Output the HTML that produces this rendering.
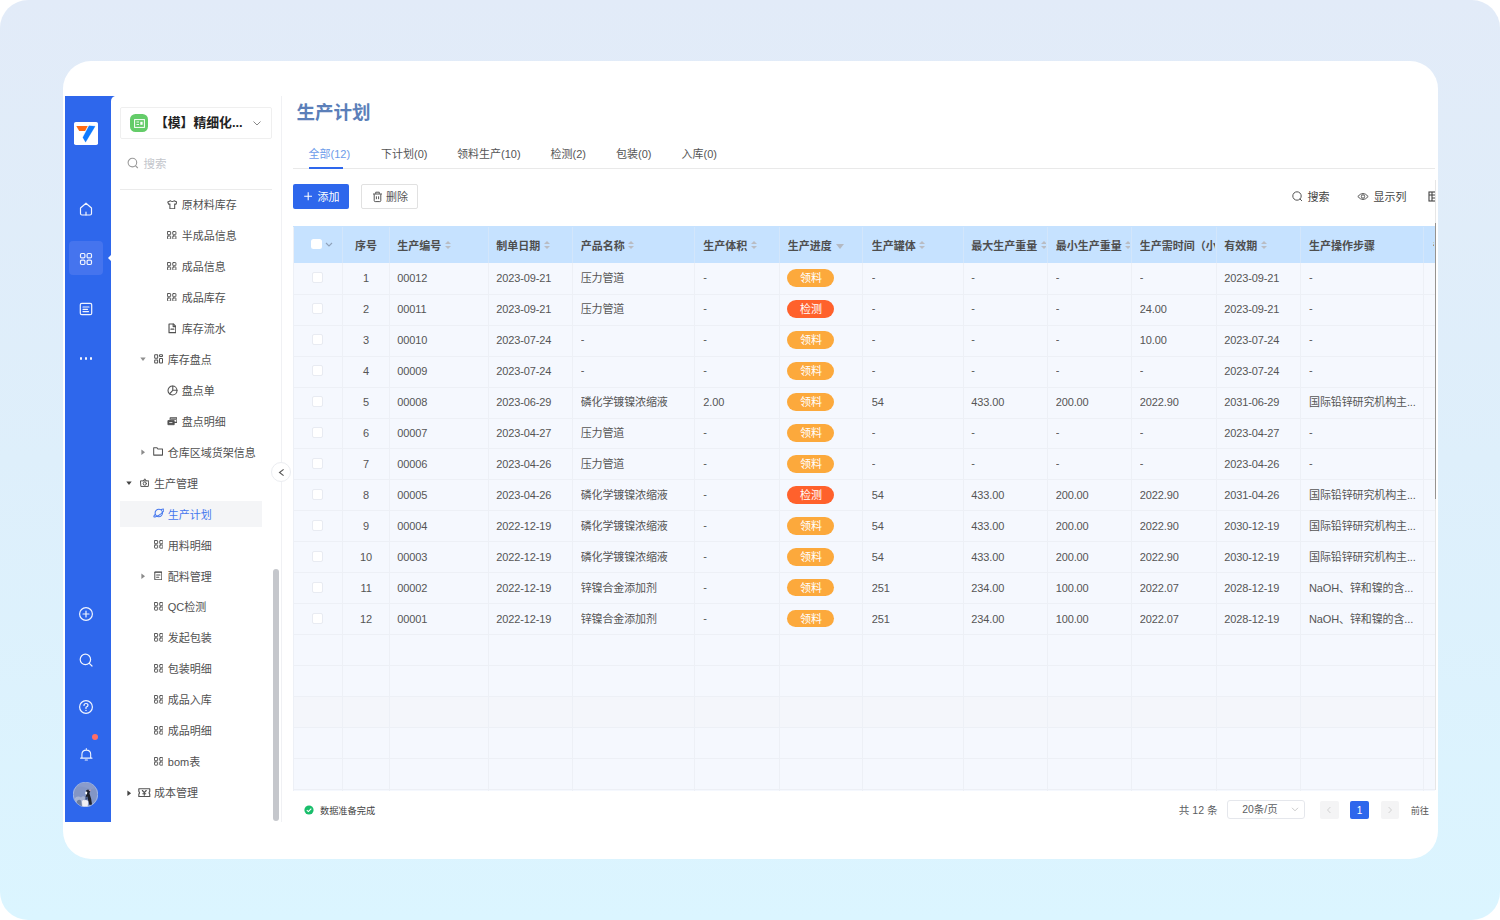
<!DOCTYPE html><html lang="zh-CN"><head><meta charset="utf-8"><title>生产计划</title><style>
*{box-sizing:border-box;margin:0;padding:0}
html,body{width:1500px;height:920px;overflow:hidden;background:#fff}
body{font-family:"Liberation Sans","Noto Sans CJK SC",sans-serif;font-size:11px;color:#444;position:relative}
.abs{position:absolute}
#bg{left:0;top:0;width:1500px;height:920px;border-radius:28px;background:linear-gradient(180deg,#e2ebf8 0%,#deeffb 50%,#dbf5ff 100%)}
#card{left:63px;top:61px;width:1375px;height:798px;border-radius:28px;background:#fff;overflow:hidden}
/* inside card coords are page coords minus (63,61): use wrapper shift */
#in{left:-63px;top:-61px;width:1500px;height:920px}
#bar{left:65px;top:96px;width:50px;height:726px;background:#2e67ec}
#panel{left:110.5px;top:96px;width:171.5px;height:726px;background:#fff;border-top-left-radius:5px}
.ico{position:absolute;display:block}
.mi{position:absolute;height:30.95px;line-height:30.95px;white-space:nowrap;color:#444;font-size:11px}
.mi svg{position:absolute}
.th{position:absolute;top:228px;height:36px;line-height:36px;font-weight:bold;color:#4e4e4e;white-space:nowrap;overflow:hidden;font-size:11px}
.td{position:absolute;height:30.97px;line-height:30.97px;letter-spacing:-0.12px;white-space:nowrap;overflow:hidden;font-size:11px;color:#555}
.vl{position:absolute;top:227px;width:1px;height:563.6px;background:#edf0f6}
.hl{position:absolute;left:293px;width:1142px;height:1px;background:#edf0f6}
.cb{position:absolute;width:11px;height:11px;background:#fff;border:1px solid #e8ebf2;border-radius:2px}
.tag{position:absolute;width:47.2px;height:17.4px;border-radius:9px;color:#fff;text-align:center;line-height:17.4px;font-size:11px}
.sort{display:inline-block;position:relative;width:6px;height:10px;margin-left:3.4px;vertical-align:-0.4px}
.sort:before{content:"";position:absolute;left:0;top:0.6px;border:3px solid transparent;border-bottom:3.8px solid #b9bcc3;border-top:0}
.sort:after{content:"";position:absolute;left:0;top:5.2px;border:3px solid transparent;border-top:3.8px solid #b9bcc3;border-bottom:0}
.filt{display:inline-block;position:relative;width:8px;height:10px;margin-left:4px;vertical-align:-1px}
.filt:after{content:"";position:absolute;left:0;top:3px;border:4px solid transparent;border-top:5px solid #b4b9c2;border-bottom:0}
.tab{position:absolute;top:144.6px;height:18px;line-height:18px;font-size:11px;color:#555;white-space:nowrap}
</style></head><body>
<div id="bg" class="abs"></div>
<div id="card" class="abs"><div id="in" class="abs">
<div id="bar" class="abs"></div>
<div id="panel" class="abs"></div>
<div class="abs" style="left:74.1px;top:121.9px;width:23.5px;height:23px;background:#fff;border-radius:1.8px"></div>
<svg class="ico" style="left:74.1px;top:121.9px" width="23.5" height="23" viewBox="0 0 23.5 23"><path d="M2.3 3.9H13.7L11.1 9.1H5.2Z" fill="#ff6a13"/><path d="M15 3.7L21.2 4.2L11.6 20.2L8.8 15.4Z" fill="#0f7bff" stroke="#0f7bff" stroke-width="0.2" stroke-linejoin="round"/></svg>
<div class="abs" style="left:69px;top:240.5px;width:34px;height:34px;border-radius:4px;background:#4574ee"></div>
<div class="abs" style="left:107.5px;top:254px;width:0;height:0;border:4px solid transparent;border-right:4px solid #fff;border-left:0"></div>
<svg class="ico" style="left:79px;top:201.5px" width="14" height="14" viewBox="0 0 14 14"><path d="M1.5 6L7 1.2L12.5 6V11.5Q12.5 13 11 13H3Q1.5 13 1.5 11.5Z" fill="none" stroke="#f0f4fe" stroke-width="1.2" stroke-linecap="round" stroke-linejoin="round"/><path d="M7 10V13" fill="none" stroke="#f0f4fe" stroke-width="1.2" stroke-linecap="round" stroke-linejoin="round"/></svg>
<svg class="ico" style="left:79px;top:251.5px" width="14" height="14" viewBox="0 0 14 14"><rect x="1.5" y="1.5" width="4.4" height="4.4" rx="1.2" fill="none" stroke="#f0f4fe" stroke-width="1.2" stroke-linecap="round" stroke-linejoin="round"/><rect x="8.1" y="1.5" width="4.4" height="4.4" rx="1.2" fill="none" stroke="#f0f4fe" stroke-width="1.2" stroke-linecap="round" stroke-linejoin="round"/><rect x="1.5" y="8.1" width="4.4" height="4.4" rx="1.2" fill="none" stroke="#f0f4fe" stroke-width="1.2" stroke-linecap="round" stroke-linejoin="round"/><rect x="8.1" y="8.1" width="4.4" height="4.4" rx="1.2" fill="none" stroke="#f0f4fe" stroke-width="1.2" stroke-linecap="round" stroke-linejoin="round"/></svg>
<svg class="ico" style="left:79px;top:302px" width="14" height="14" viewBox="0 0 14 14"><rect x="1.3" y="1.3" width="11.4" height="11.4" rx="1.5" fill="none" stroke="#f0f4fe" stroke-width="1.2" stroke-linecap="round" stroke-linejoin="round"/><path d="M4 5H10M4 7.3H8.5M4 9.6H9.5" fill="none" stroke="#f0f4fe" stroke-width="1.2" stroke-linecap="round" stroke-linejoin="round" stroke-width="1"/></svg>
<div class="abs" style="left:79.7px;top:357.0px;width:2.6px;height:2.6px;border-radius:50%;background:#f4f7fe"></div>
<div class="abs" style="left:84.7px;top:357.0px;width:2.6px;height:2.6px;border-radius:50%;background:#f4f7fe"></div>
<div class="abs" style="left:89.7px;top:357.0px;width:2.6px;height:2.6px;border-radius:50%;background:#f4f7fe"></div>
<svg class="ico" style="left:78px;top:606.3px" width="16" height="16" viewBox="0 0 16 16"><circle cx="8" cy="8" r="6.4" fill="none" stroke="#f0f4fe" stroke-width="1.2" stroke-linecap="round" stroke-linejoin="round"/><path d="M8 5V11M5 8H11" fill="none" stroke="#f0f4fe" stroke-width="1.2" stroke-linecap="round" stroke-linejoin="round"/></svg>
<svg class="ico" style="left:78px;top:652.3px" width="16" height="16" viewBox="0 0 16 16"><circle cx="7.4" cy="7.4" r="5.2" fill="none" stroke="#f0f4fe" stroke-width="1.2" stroke-linecap="round" stroke-linejoin="round"/><path d="M11.3 11.3L14 14" fill="none" stroke="#f0f4fe" stroke-width="1.2" stroke-linecap="round" stroke-linejoin="round"/></svg>
<svg class="ico" style="left:78px;top:698.8px" width="16" height="16" viewBox="0 0 16 16"><circle cx="8" cy="8" r="6.4" fill="none" stroke="#f0f4fe" stroke-width="1.2" stroke-linecap="round" stroke-linejoin="round"/><path d="M6 6.4Q6 4.5 8 4.5Q10 4.5 10 6.3Q10 7.4 8 8.3V9.4" fill="none" stroke="#f0f4fe" stroke-width="1.2" stroke-linecap="round" stroke-linejoin="round"/><circle cx="8" cy="11.4" r="0.7" fill="#fff"/></svg>
<div class="abs" style="left:91.9px;top:733.8px;width:6px;height:6px;border-radius:50%;background:#ff6e66"></div>
<svg class="ico" style="left:78.8px;top:746.6px" width="14.6" height="14.6" viewBox="0 0 16 16"><path d="M3.2 12V8Q3.2 3.4 8 3.4Q12.8 3.4 12.8 8V12M1.8 12.2H14.2M8 1.8V3.2M6.8 14.2H9.2" fill="none" stroke="#f0f4fe" stroke-width="1.2" stroke-linecap="round" stroke-linejoin="round"/></svg>
<svg class="ico" style="left:73.4px;top:781.8px" width="25" height="25" viewBox="0 0 25 25"><defs><clipPath id="avc"><circle cx="12.5" cy="12.5" r="12"/></clipPath></defs><circle cx="12.5" cy="12.5" r="12.3" fill="#8396c5" stroke="#b9cdf4" stroke-width="0.7"/><g clip-path="url(#avc)"><path d="M0 6Q8 3 14 6T25 4V0H0Z" fill="#8a9ccb"/><path d="M2 16Q5 13.5 8 15.5Q10 13.5 12 15L11 25H0Z" fill="#a7b4d3"/><path d="M4 19Q6 17 8 18.5L9 25H3Z" fill="#6f7f9f"/><path d="M13 8.5L15 7.5L17.5 8.8L16.4 11.2L18.2 17L19 22.5L16.5 23L15.3 19L14.3 14.5L12.4 15.5L13.4 12Z" fill="#1f222b"/><path d="M12.3 10Q13.3 9 14.2 10.4Q14.2 12.6 13 12.6Q12 12 12.3 10Z" fill="#fff"/><path d="M15.5 8.2L18 7.4L17.4 9.6Z" fill="#c9a9c4"/><path d="M9 19.5Q9.5 17.8 11.5 18.2Q14.5 17.6 15.3 19.6L14.6 25H9.4Z" fill="#f1f1f4"/><path d="M12.4 15.8L14.4 14.8L14.8 17.2L12.6 17.8Z" fill="#3d5078"/></g></svg>
<div class="abs" style="left:120px;top:107px;width:152px;height:31.5px;border:1px solid #efefef;border-radius:2px;background:#fff"></div>
<div class="abs" style="left:129.7px;top:113.8px;width:18.7px;height:18.7px;border-radius:5.5px;background:#64cc69"></div>
<svg class="ico" style="left:134px;top:118.5px" width="11" height="9" viewBox="0 0 11 9"><rect x="0.6" y="0.6" width="9.8" height="7.8" fill="none" stroke="#fff" stroke-width="1"/><path d="M2.5 3H5M2.5 5.5H5" stroke="#fff" stroke-width="0.9"/><rect x="6.3" y="2.8" width="2.3" height="3" fill="#fff"/></svg>
<div class="abs" style="left:154.9px;top:113.3px;height:20px;line-height:20px;font-size:12.85px;font-weight:bold;color:#222;white-space:nowrap">【模】精细化...</div>
<svg class="ico" style="left:252px;top:120px" width="10" height="7" viewBox="0 0 10 7"><path d="M1.5 1.5L5 5L8.5 1.5" fill="none" stroke="#888" stroke-width="1"/></svg>
<svg class="ico" style="left:127px;top:157px" width="12" height="12" viewBox="0 0 12 12"><circle cx="5.4" cy="5.6" r="4.3" fill="none" stroke="#999" stroke-width="1.1"/><path d="M8.6 8.8L10.8 11" stroke="#999" stroke-width="1.1"/></svg>
<div class="abs" style="left:143.5px;top:154.8px;height:18px;line-height:18px;font-size:11.5px;color:#c3c6cc">搜索</div>
<div class="abs" style="left:120px;top:189px;width:152px;height:1px;background:#ebebeb"></div>
<div class="abs" style="left:120px;top:500.6px;width:142px;height:26.6px;background:#f4f5f7"></div>
<div class="mi" style="left:0;top:189.33px;width:281px;color:#505050">
<span class="abs" style="left:166.80px;top:10.48px;line-height:0"><svg width="10.6" height="9.6" viewBox="0 0 12 12.5" preserveAspectRatio="none"><path d="M4 1L0.9 2.6L1.9 5.6L3.3 5V11.5H8.7V5L10.1 5.6L11.1 2.6L8 1Q6 3 4 1Z" fill="none" stroke="#525252" stroke-width="1.2" stroke-linejoin="round" stroke-linecap="round"/></svg></span>
<span class="abs" style="left:181.7px;top:0.8px">原材料库存</span></div>
<div class="mi" style="left:0;top:220.28px;width:281px;color:#505050">
<span class="abs" style="left:167.40px;top:10.53px;line-height:0"><svg width="9.4" height="8.7" viewBox="0 0 8.9 8.1"><rect x="0.45" y="0.45" width="3" height="3" rx="0.5" fill="none" stroke="#525252" stroke-width="0.9" stroke-linejoin="round" stroke-linecap="round"/><rect x="5.45" y="0.45" width="3" height="3" rx="0.5" fill="none" stroke="#525252" stroke-width="0.9" stroke-linejoin="round" stroke-linecap="round"/><rect x="0.45" y="4.65" width="3" height="3" rx="0.5" fill="none" stroke="#525252" stroke-width="0.9" stroke-linejoin="round" stroke-linecap="round"/><rect x="5.45" y="4.65" width="3" height="3" rx="0.5" fill="none" stroke="#525252" stroke-width="0.9" stroke-linejoin="round" stroke-linecap="round"/></svg></span>
<span class="abs" style="left:181.7px;top:0.8px">半成品信息</span></div>
<div class="mi" style="left:0;top:251.22px;width:281px;color:#505050">
<span class="abs" style="left:167.40px;top:10.53px;line-height:0"><svg width="9.4" height="8.7" viewBox="0 0 8.9 8.1"><rect x="0.45" y="0.45" width="3" height="3" rx="0.5" fill="none" stroke="#525252" stroke-width="0.9" stroke-linejoin="round" stroke-linecap="round"/><rect x="5.45" y="0.45" width="3" height="3" rx="0.5" fill="none" stroke="#525252" stroke-width="0.9" stroke-linejoin="round" stroke-linecap="round"/><rect x="0.45" y="4.65" width="3" height="3" rx="0.5" fill="none" stroke="#525252" stroke-width="0.9" stroke-linejoin="round" stroke-linecap="round"/><rect x="5.45" y="4.65" width="3" height="3" rx="0.5" fill="none" stroke="#525252" stroke-width="0.9" stroke-linejoin="round" stroke-linecap="round"/></svg></span>
<span class="abs" style="left:181.7px;top:0.8px">成品信息</span></div>
<div class="mi" style="left:0;top:282.17px;width:281px;color:#505050">
<span class="abs" style="left:167.40px;top:10.53px;line-height:0"><svg width="9.4" height="8.7" viewBox="0 0 8.9 8.1"><rect x="0.45" y="0.45" width="3" height="3" rx="0.5" fill="none" stroke="#525252" stroke-width="0.9" stroke-linejoin="round" stroke-linecap="round"/><rect x="5.45" y="0.45" width="3" height="3" rx="0.5" fill="none" stroke="#525252" stroke-width="0.9" stroke-linejoin="round" stroke-linecap="round"/><rect x="0.45" y="4.65" width="3" height="3" rx="0.5" fill="none" stroke="#525252" stroke-width="0.9" stroke-linejoin="round" stroke-linecap="round"/><rect x="5.45" y="4.65" width="3" height="3" rx="0.5" fill="none" stroke="#525252" stroke-width="0.9" stroke-linejoin="round" stroke-linecap="round"/></svg></span>
<span class="abs" style="left:181.7px;top:0.8px">成品库存</span></div>
<div class="mi" style="left:0;top:313.12px;width:281px;color:#505050">
<span class="abs" style="left:167.70px;top:9.98px;line-height:0"><svg width="8.8" height="10.6" viewBox="0 0 9 11"><path d="M1 1H5.5L8 3.5V10H1Z" fill="none" stroke="#525252" stroke-width="1.2" stroke-linejoin="round" stroke-linecap="round"/><path d="M5.3 1.2V3.7H7.8M3 6.4H6" fill="none" stroke="#525252" stroke-width="1.2" stroke-linejoin="round" stroke-linecap="round" stroke-width="0.9"/></svg></span>
<span class="abs" style="left:181.7px;top:0.8px">库存流水</span></div>
<div class="mi" style="left:0;top:344.07px;width:281px;color:#505050">
<span class="abs" style="left:139.70px;top:13.27px;line-height:0"><svg width="6" height="4.4" viewBox="0 0 6 4.4"><path d="M0.3 0.4H5.7L3 4.1Z" fill="#8f8f8f"/></svg></span>
<span class="abs" style="left:153.60px;top:10.43px;line-height:0"><svg width="9.2" height="9.7" viewBox="0 0 11 10.6" preserveAspectRatio="none"><rect x="0.8" y="0.8" width="3.6" height="3.8" rx="0.6" fill="none" stroke="#525252" stroke-width="1.2" stroke-linejoin="round" stroke-linecap="round"/><rect x="6.6" y="0.8" width="3.6" height="2" rx="0.6" fill="none" stroke="#525252" stroke-width="1.2" stroke-linejoin="round" stroke-linecap="round"/><rect x="0.8" y="6.6" width="3.6" height="3.2" rx="0.6" fill="none" stroke="#525252" stroke-width="1.2" stroke-linejoin="round" stroke-linecap="round"/><rect x="6.6" y="5" width="3.6" height="4.8" rx="0.6" fill="none" stroke="#525252" stroke-width="1.2" stroke-linejoin="round" stroke-linecap="round"/></svg></span>
<span class="abs" style="left:167.8px;top:0.8px">库存盘点</span></div>
<div class="mi" style="left:0;top:375.02px;width:281px;color:#505050">
<span class="abs" style="left:166.50px;top:9.78px;line-height:0"><svg width="11" height="11" viewBox="0 0 12 12"><circle cx="6" cy="6" r="4.9" fill="none" stroke="#525252" stroke-width="1.2" stroke-linejoin="round" stroke-linecap="round"/><path d="M6.3 1.2V5.8H11M6.3 5.8L2.8 9.6" fill="none" stroke="#525252" stroke-width="1.2" stroke-linejoin="round" stroke-linecap="round"/></svg></span>
<span class="abs" style="left:181.7px;top:0.8px">盘点单</span></div>
<div class="mi" style="left:0;top:405.98px;width:281px;color:#505050">
<span class="abs" style="left:166.50px;top:10.98px;line-height:0"><svg width="10.8" height="8.6" viewBox="0 0 12 9.6"><path d="M1 4H8V8.6H1Z" fill="#525252" stroke="#525252" stroke-width="1"/><path d="M3.5 4V1H11V6H8" fill="none" stroke="#525252" stroke-width="1.2" stroke-linejoin="round" stroke-linecap="round"/><path d="M5 2.6H9.5" fill="none" stroke="#525252" stroke-width="1.2" stroke-linejoin="round" stroke-linecap="round" stroke-width="0.8"/><path d="M2.5 6.2H6" stroke="#fff" stroke-width="0.9"/></svg></span>
<span class="abs" style="left:181.7px;top:0.8px">盘点明细</span></div>
<div class="mi" style="left:0;top:436.92px;width:281px;color:#505050">
<span class="abs" style="left:141.10px;top:12.47px;line-height:0"><svg width="4.4" height="6.4" viewBox="0 0 4.4 6.4"><path d="M0.4 0.4V6L4.1 3.2Z" fill="#8a8a8a"/></svg></span>
<span class="abs" style="left:152.90px;top:10.57px;line-height:0"><svg width="10.2" height="8.8" viewBox="0 0 12 10.4"><path d="M0.8 0.8H4.5L5.7 2.4H11.2V9.6H0.8Z" fill="none" stroke="#525252" stroke-width="1.2" stroke-linejoin="round" stroke-linecap="round"/></svg></span>
<span class="abs" style="left:167.8px;top:0.8px">仓库区域货架信息</span></div>
<div class="mi" style="left:0;top:467.88px;width:281px;color:#505050">
<span class="abs" style="left:125.90px;top:13.27px;line-height:0"><svg width="6" height="4.4" viewBox="0 0 6 4.4"><path d="M0.3 0.4H5.7L3 4.1Z" fill="#444"/></svg></span>
<span class="abs" style="left:139.50px;top:9.78px;line-height:0"><svg width="9.6" height="9.2" viewBox="0 0 12 11.5"><path d="M1 3.6H11L10.4 10.6H1.6Z" fill="none" stroke="#525252" stroke-width="1.2" stroke-linejoin="round" stroke-linecap="round"/><circle cx="6" cy="7" r="2" fill="none" stroke="#525252" stroke-width="1.2" stroke-linejoin="round" stroke-linecap="round"/><path d="M4.3 3.4L6 1L7.7 3.4" fill="none" stroke="#525252" stroke-width="1.2" stroke-linejoin="round" stroke-linecap="round"/></svg></span>
<span class="abs" style="left:154px;top:0.8px">生产管理</span></div>
<div class="mi" style="left:0;top:498.82px;width:281px;color:#4577ee">
<span class="abs" style="left:152.80px;top:8.78px;line-height:0"><svg width="11.4" height="10" viewBox="0 0 13 11.4"><circle cx="6.6" cy="5.7" r="4.2" fill="none" stroke="#4577ee" stroke-width="1.2" stroke-linejoin="round" stroke-linecap="round"/><path d="M2.6 7.4Q-0.6 10.6 2.4 10.2Q5.6 9.6 9.4 6.4Q13.6 2.6 12.2 1.4Q11.4 0.8 9.6 1.8" fill="none" stroke="#4577ee" stroke-width="1.2" stroke-linejoin="round" stroke-linecap="round"/></svg></span>
<span class="abs" style="left:167.8px;top:0.8px">生产计划</span></div>
<div class="mi" style="left:0;top:529.77px;width:281px;color:#505050">
<span class="abs" style="left:153.50px;top:10.53px;line-height:0"><svg width="9.4" height="8.7" viewBox="0 0 8.9 8.1"><rect x="0.45" y="0.45" width="3" height="3" rx="0.5" fill="none" stroke="#525252" stroke-width="0.9" stroke-linejoin="round" stroke-linecap="round"/><rect x="5.45" y="0.45" width="3" height="3" rx="0.5" fill="none" stroke="#525252" stroke-width="0.9" stroke-linejoin="round" stroke-linecap="round"/><rect x="0.45" y="4.65" width="3" height="3" rx="0.5" fill="none" stroke="#525252" stroke-width="0.9" stroke-linejoin="round" stroke-linecap="round"/><rect x="5.45" y="4.65" width="3" height="3" rx="0.5" fill="none" stroke="#525252" stroke-width="0.9" stroke-linejoin="round" stroke-linecap="round"/></svg></span>
<span class="abs" style="left:167.8px;top:0.8px">用料明细</span></div>
<div class="mi" style="left:0;top:560.73px;width:281px;color:#505050">
<span class="abs" style="left:141.10px;top:12.47px;line-height:0"><svg width="4.4" height="6.4" viewBox="0 0 4.4 6.4"><path d="M0.4 0.4V6L4.1 3.2Z" fill="#8a8a8a"/></svg></span>
<span class="abs" style="left:153.90px;top:10.07px;line-height:0"><svg width="8.6" height="9.4" viewBox="0 0 10 11"><rect x="0.9" y="1.2" width="8.2" height="9" rx="0.6" fill="none" stroke="#525252" stroke-width="1.2" stroke-linejoin="round" stroke-linecap="round"/><path d="M0.9 1.4H9.1" fill="none" stroke="#525252" stroke-width="1.2" stroke-linejoin="round" stroke-linecap="round" stroke-width="1.5"/><path d="M3 4.8H7M3 7.2H5.6" fill="none" stroke="#525252" stroke-width="1.2" stroke-linejoin="round" stroke-linecap="round"/></svg></span>
<span class="abs" style="left:167.8px;top:0.8px">配料管理</span></div>
<div class="mi" style="left:0;top:591.67px;width:281px;color:#505050">
<span class="abs" style="left:153.50px;top:10.53px;line-height:0"><svg width="9.4" height="8.7" viewBox="0 0 8.9 8.1"><rect x="0.45" y="0.45" width="3" height="3" rx="0.5" fill="none" stroke="#525252" stroke-width="0.9" stroke-linejoin="round" stroke-linecap="round"/><rect x="5.45" y="0.45" width="3" height="3" rx="0.5" fill="none" stroke="#525252" stroke-width="0.9" stroke-linejoin="round" stroke-linecap="round"/><rect x="0.45" y="4.65" width="3" height="3" rx="0.5" fill="none" stroke="#525252" stroke-width="0.9" stroke-linejoin="round" stroke-linecap="round"/><rect x="5.45" y="4.65" width="3" height="3" rx="0.5" fill="none" stroke="#525252" stroke-width="0.9" stroke-linejoin="round" stroke-linecap="round"/></svg></span>
<span class="abs" style="left:167.8px;top:0.8px">QC检测</span></div>
<div class="mi" style="left:0;top:622.62px;width:281px;color:#505050">
<span class="abs" style="left:153.50px;top:10.53px;line-height:0"><svg width="9.4" height="8.7" viewBox="0 0 8.9 8.1"><rect x="0.45" y="0.45" width="3" height="3" rx="0.5" fill="none" stroke="#525252" stroke-width="0.9" stroke-linejoin="round" stroke-linecap="round"/><rect x="5.45" y="0.45" width="3" height="3" rx="0.5" fill="none" stroke="#525252" stroke-width="0.9" stroke-linejoin="round" stroke-linecap="round"/><rect x="0.45" y="4.65" width="3" height="3" rx="0.5" fill="none" stroke="#525252" stroke-width="0.9" stroke-linejoin="round" stroke-linecap="round"/><rect x="5.45" y="4.65" width="3" height="3" rx="0.5" fill="none" stroke="#525252" stroke-width="0.9" stroke-linejoin="round" stroke-linecap="round"/></svg></span>
<span class="abs" style="left:167.8px;top:0.8px">发起包装</span></div>
<div class="mi" style="left:0;top:653.57px;width:281px;color:#505050">
<span class="abs" style="left:153.50px;top:10.53px;line-height:0"><svg width="9.4" height="8.7" viewBox="0 0 8.9 8.1"><rect x="0.45" y="0.45" width="3" height="3" rx="0.5" fill="none" stroke="#525252" stroke-width="0.9" stroke-linejoin="round" stroke-linecap="round"/><rect x="5.45" y="0.45" width="3" height="3" rx="0.5" fill="none" stroke="#525252" stroke-width="0.9" stroke-linejoin="round" stroke-linecap="round"/><rect x="0.45" y="4.65" width="3" height="3" rx="0.5" fill="none" stroke="#525252" stroke-width="0.9" stroke-linejoin="round" stroke-linecap="round"/><rect x="5.45" y="4.65" width="3" height="3" rx="0.5" fill="none" stroke="#525252" stroke-width="0.9" stroke-linejoin="round" stroke-linecap="round"/></svg></span>
<span class="abs" style="left:167.8px;top:0.8px">包装明细</span></div>
<div class="mi" style="left:0;top:684.52px;width:281px;color:#505050">
<span class="abs" style="left:153.50px;top:10.53px;line-height:0"><svg width="9.4" height="8.7" viewBox="0 0 8.9 8.1"><rect x="0.45" y="0.45" width="3" height="3" rx="0.5" fill="none" stroke="#525252" stroke-width="0.9" stroke-linejoin="round" stroke-linecap="round"/><rect x="5.45" y="0.45" width="3" height="3" rx="0.5" fill="none" stroke="#525252" stroke-width="0.9" stroke-linejoin="round" stroke-linecap="round"/><rect x="0.45" y="4.65" width="3" height="3" rx="0.5" fill="none" stroke="#525252" stroke-width="0.9" stroke-linejoin="round" stroke-linecap="round"/><rect x="5.45" y="4.65" width="3" height="3" rx="0.5" fill="none" stroke="#525252" stroke-width="0.9" stroke-linejoin="round" stroke-linecap="round"/></svg></span>
<span class="abs" style="left:167.8px;top:0.8px">成品入库</span></div>
<div class="mi" style="left:0;top:715.48px;width:281px;color:#505050">
<span class="abs" style="left:153.50px;top:10.53px;line-height:0"><svg width="9.4" height="8.7" viewBox="0 0 8.9 8.1"><rect x="0.45" y="0.45" width="3" height="3" rx="0.5" fill="none" stroke="#525252" stroke-width="0.9" stroke-linejoin="round" stroke-linecap="round"/><rect x="5.45" y="0.45" width="3" height="3" rx="0.5" fill="none" stroke="#525252" stroke-width="0.9" stroke-linejoin="round" stroke-linecap="round"/><rect x="0.45" y="4.65" width="3" height="3" rx="0.5" fill="none" stroke="#525252" stroke-width="0.9" stroke-linejoin="round" stroke-linecap="round"/><rect x="5.45" y="4.65" width="3" height="3" rx="0.5" fill="none" stroke="#525252" stroke-width="0.9" stroke-linejoin="round" stroke-linecap="round"/></svg></span>
<span class="abs" style="left:167.8px;top:0.8px">成品明细</span></div>
<div class="mi" style="left:0;top:746.43px;width:281px;color:#505050">
<span class="abs" style="left:153.50px;top:10.53px;line-height:0"><svg width="9.4" height="8.7" viewBox="0 0 8.9 8.1"><rect x="0.45" y="0.45" width="3" height="3" rx="0.5" fill="none" stroke="#525252" stroke-width="0.9" stroke-linejoin="round" stroke-linecap="round"/><rect x="5.45" y="0.45" width="3" height="3" rx="0.5" fill="none" stroke="#525252" stroke-width="0.9" stroke-linejoin="round" stroke-linecap="round"/><rect x="0.45" y="4.65" width="3" height="3" rx="0.5" fill="none" stroke="#525252" stroke-width="0.9" stroke-linejoin="round" stroke-linecap="round"/><rect x="5.45" y="4.65" width="3" height="3" rx="0.5" fill="none" stroke="#525252" stroke-width="0.9" stroke-linejoin="round" stroke-linecap="round"/></svg></span>
<span class="abs" style="left:167.8px;top:0.8px">bom表</span></div>
<div class="mi" style="left:0;top:777.37px;width:281px;color:#505050">
<span class="abs" style="left:127.30px;top:12.47px;line-height:0"><svg width="4.4" height="6.4" viewBox="0 0 4.4 6.4"><path d="M0.4 0.4V6L4.1 3.2Z" fill="#444"/></svg></span>
<span class="abs" style="left:138.30px;top:10.57px;line-height:0"><svg width="12.6" height="9.4" viewBox="0 0 13 9.8"><path d="M0.8 0.8H12.2V3.4Q10.9 4.9 12.2 6.4V9H0.8V6.4Q2.1 4.9 0.8 3.4Z" fill="none" stroke="#525252" stroke-width="1.2" stroke-linejoin="round" stroke-linecap="round"/><path d="M4.5 2.6L6.5 4.8L8.5 2.6M6.5 4.8V7.6M5 6H8" fill="none" stroke="#525252" stroke-width="1.2" stroke-linejoin="round" stroke-linecap="round" stroke-width="0.9"/></svg></span>
<span class="abs" style="left:154px;top:0.8px">成本管理</span></div>
<div class="abs" style="left:272.8px;top:568.7px;width:6.3px;height:252.6px;border-radius:3.2px;background:#c5c7cc"></div>
<div class="abs" style="left:281px;top:96px;width:1px;height:726px;background:#f0f1f4"></div>
<div class="abs" style="left:271px;top:462.3px;width:20px;height:20px;border-radius:50%;background:#fff;border:1px solid #ebedf1"></div>
<svg class="ico" style="left:277.5px;top:467.5px" width="7" height="9" viewBox="0 0 7 9"><path d="M5.6 1.4L1.5 4.5L5.6 7.6" fill="none" stroke="#555" stroke-width="1.1"/></svg>
<div class="abs" style="left:0;top:0;width:1435px;height:920px;overflow:hidden">
<div class="abs" style="left:296.5px;top:99.3px;height:28px;line-height:28px;font-size:18.55px;font-weight:bold;color:#5b7fb9;white-space:nowrap">生产计划</div>
<div class="tab" style="left:308.5px;color:#6c9bea">全部(12)</div>
<div class="tab" style="left:381px;color:#555">下计划(0)</div>
<div class="tab" style="left:457px;color:#555">领料生产(10)</div>
<div class="tab" style="left:550.5px;color:#555">检测(2)</div>
<div class="tab" style="left:616px;color:#555">包装(0)</div>
<div class="tab" style="left:681.5px;color:#555">入库(0)</div>
<div class="abs" style="left:293px;top:168px;width:1145px;height:1px;background:#e9e9e9"></div>
<div class="abs" style="left:308.5px;top:167px;width:34.5px;height:2px;background:#2e67ec"></div>
<div class="abs" style="left:293px;top:184px;width:55.5px;height:25px;background:#2e67ec;border-radius:2px;color:#fff;line-height:25px;font-size:11px;white-space:nowrap"><svg class="ico" style="left:11px;top:8.4px" width="8.4" height="8.4" viewBox="0 0 8.4 8.4"><path d="M4.2 0.2V8.2M0.2 4.2H8.2" stroke="#fff" stroke-width="1.1"/></svg><span class="abs" style="left:24.5px;top:0.9px">添加</span></div>
<div class="abs" style="left:360.5px;top:184px;width:57.4px;height:25px;background:#fff;border:1px solid #e1e1e1;border-radius:2px;color:#555;line-height:23px;font-size:11px;white-space:nowrap"><svg class="ico" style="left:10px;top:5.5px" width="11" height="12" viewBox="0 0 11 12"><path d="M1 3H10M3.7 2.8V1.2H7.3V2.8M2.2 3.2V9.6Q2.2 10.6 3.2 10.6H7.8Q8.8 10.6 8.8 9.6V3.2M4.4 5.3V8.2M6.6 5.3V8.2" fill="none" stroke="#555" stroke-width="1"/></svg><span class="abs" style="left:24.5px;top:0.9px">删除</span></div>
<svg class="ico" style="left:1292.3px;top:190.6px" width="11" height="11" viewBox="0 0 11 11"><circle cx="5" cy="5" r="4.2" fill="none" stroke="#555" stroke-width="1"/><path d="M7.8 7.8L10 10" stroke="#555" stroke-width="1"/></svg>
<div class="abs" style="left:1307.6px;top:188.1px;height:18px;line-height:18px;color:#444;font-size:11px;white-space:nowrap">搜索</div>
<svg class="ico" style="left:1357.2px;top:191.8px" width="12" height="9" viewBox="0 0 12 9"><path d="M0.8 4.5Q6 -1.5 11.2 4.5Q6 10.5 0.8 4.5Z" fill="none" stroke="#555" stroke-width="1"/><circle cx="6" cy="4.5" r="1.7" fill="none" stroke="#555" stroke-width="1"/></svg>
<div class="abs" style="left:1373.4px;top:188.1px;height:18px;line-height:18px;color:#444;font-size:11px;white-space:nowrap">显示列</div>
<svg class="ico" style="left:1427.5px;top:190.5px" width="11" height="11" viewBox="0 0 11 11"><rect x="1" y="1" width="9" height="9" fill="none" stroke="#444" stroke-width="1.1"/><path d="M1 4H10M4 1V10M4 7H10" stroke="#444" stroke-width="1.1"/></svg>
<div class="abs" style="left:293px;top:227px;width:1143px;height:563.6px;background:#f5f8fe"></div>
<div class="abs" style="left:293px;top:696.58px;width:1143px;height:30.97px;background:#f4f6fb"></div>
<div class="abs" style="left:293px;top:226.4px;width:1143px;height:36.6px;background:#c6e2ff"></div>
<div class="hl" style="top:293.62px"></div>
<div class="hl" style="top:324.59px"></div>
<div class="hl" style="top:355.56px"></div>
<div class="hl" style="top:386.53px"></div>
<div class="hl" style="top:417.50px"></div>
<div class="hl" style="top:448.47px"></div>
<div class="hl" style="top:479.44px"></div>
<div class="hl" style="top:510.41px"></div>
<div class="hl" style="top:541.38px"></div>
<div class="hl" style="top:572.35px"></div>
<div class="hl" style="top:603.32px"></div>
<div class="hl" style="top:634.29px"></div>
<div class="hl" style="top:665.26px"></div>
<div class="hl" style="top:696.23px"></div>
<div class="hl" style="top:727.20px"></div>
<div class="hl" style="top:758.17px"></div>
<div class="hl" style="top:789.14px"></div>
<div class="vl" style="left:292.50px"></div>
<div class="vl" style="left:342.40px"></div>
<div class="vl" style="left:388.80px"></div>
<div class="vl" style="left:487.80px"></div>
<div class="vl" style="left:572.20px"></div>
<div class="vl" style="left:693.50px"></div>
<div class="vl" style="left:778.50px"></div>
<div class="vl" style="left:862.20px"></div>
<div class="vl" style="left:962.50px"></div>
<div class="vl" style="left:1046.50px"></div>
<div class="vl" style="left:1131.00px"></div>
<div class="vl" style="left:1215.50px"></div>
<div class="vl" style="left:1299.50px"></div>
<div class="vl" style="left:1422.50px"></div>
<div class="abs" style="left:342.40px;top:227px;width:1px;height:36px;background:#d3e6fb"></div>
<div class="abs" style="left:388.80px;top:227px;width:1px;height:36px;background:#d3e6fb"></div>
<div class="abs" style="left:487.80px;top:227px;width:1px;height:36px;background:#d3e6fb"></div>
<div class="abs" style="left:572.20px;top:227px;width:1px;height:36px;background:#d3e6fb"></div>
<div class="abs" style="left:693.50px;top:227px;width:1px;height:36px;background:#d3e6fb"></div>
<div class="abs" style="left:778.50px;top:227px;width:1px;height:36px;background:#d3e6fb"></div>
<div class="abs" style="left:862.20px;top:227px;width:1px;height:36px;background:#d3e6fb"></div>
<div class="abs" style="left:962.50px;top:227px;width:1px;height:36px;background:#d3e6fb"></div>
<div class="abs" style="left:1046.50px;top:227px;width:1px;height:36px;background:#d3e6fb"></div>
<div class="abs" style="left:1131.00px;top:227px;width:1px;height:36px;background:#d3e6fb"></div>
<div class="abs" style="left:1215.50px;top:227px;width:1px;height:36px;background:#d3e6fb"></div>
<div class="abs" style="left:1299.50px;top:227px;width:1px;height:36px;background:#d3e6fb"></div>
<div class="abs" style="left:1422.50px;top:227px;width:1px;height:36px;background:#d3e6fb"></div>
<div class="abs" style="left:311.2px;top:238.6px;width:10.6px;height:10.6px;border-radius:2.5px;background:#fff"></div>
<svg class="ico" style="left:325.4px;top:242.2px" width="8" height="5" viewBox="0 0 8 5"><path d="M1 1L4 4L7 1" fill="none" stroke="#8fa2ba" stroke-width="1.1"/></svg>
<div class="th" style="left:342.9px;width:46.400000000000034px;text-align:center">序号</div>
<div class="th" style="left:397.3px;width:90.0px">生产编号<i class="sort"></i></div>
<div class="th" style="left:496.3px;width:75.40000000000003px">制单日期<i class="sort"></i></div>
<div class="th" style="left:580.7px;width:112.29999999999995px">产品名称<i class="sort"></i></div>
<div class="th" style="left:703.3px;width:74.7px">生产体积<i class="sort"></i></div>
<div class="th" style="left:787.7px;width:74.00000000000004px">生产进度<i class="filt"></i></div>
<div class="th" style="left:871.7px;width:90.29999999999995px">生产罐体<i class="sort"></i></div>
<div class="th" style="left:971.3px;width:74.7px">最大生产重量<i class="sort"></i></div>
<div class="th" style="left:1055.7px;width:74.8px">最小生产重量<i class="sort"></i></div>
<div class="th" style="left:1139.8px;width:75.2px">生产需时间（小时）</div>
<div class="th" style="left:1224.3px;width:74.7px">有效期<i class="sort"></i></div>
<div class="th" style="left:1309px;width:113px">生产操作步骤</div>
<div class="th" style="left:1433px;width:1px">备</div>
<div class="cb" style="left:311.5px;top:272.00px"></div>
<div class="td" style="left:342.9px;top:263.40px;width:46.400000000000034px;text-align:center">1</div>
<div class="td" style="left:397.3px;top:263.40px;width:90.0px">00012</div>
<div class="td" style="left:496.3px;top:263.40px;width:75.40000000000003px">2023-09-21</div>
<div class="td" style="left:580.7px;top:263.40px;width:112.29999999999995px">压力管道</div>
<div class="td" style="left:703.3px;top:262.40px;width:74.7px">-</div>
<div class="tag" style="left:787.3px;top:269.40px;background:#fca93c"><span style="position:relative;top:1.1px">领料</span></div>
<div class="td" style="left:871.7px;top:262.40px;width:90.29999999999995px">-</div>
<div class="td" style="left:971.3px;top:262.40px;width:74.7px">-</div>
<div class="td" style="left:1055.7px;top:262.40px;width:74.8px">-</div>
<div class="td" style="left:1139.8px;top:262.40px;width:75.2px">-</div>
<div class="td" style="left:1224.3px;top:263.40px;width:74.7px">2023-09-21</div>
<div class="td" style="left:1309px;top:262.40px;width:113px">-</div>
<div class="cb" style="left:311.5px;top:302.97px"></div>
<div class="td" style="left:342.9px;top:294.37px;width:46.400000000000034px;text-align:center">2</div>
<div class="td" style="left:397.3px;top:294.37px;width:90.0px">00011</div>
<div class="td" style="left:496.3px;top:294.37px;width:75.40000000000003px">2023-09-21</div>
<div class="td" style="left:580.7px;top:294.37px;width:112.29999999999995px">压力管道</div>
<div class="td" style="left:703.3px;top:293.37px;width:74.7px">-</div>
<div class="tag" style="left:787.3px;top:300.37px;background:#ff612c"><span style="position:relative;top:1.1px">检测</span></div>
<div class="td" style="left:871.7px;top:293.37px;width:90.29999999999995px">-</div>
<div class="td" style="left:971.3px;top:293.37px;width:74.7px">-</div>
<div class="td" style="left:1055.7px;top:293.37px;width:74.8px">-</div>
<div class="td" style="left:1139.8px;top:294.37px;width:75.2px">24.00</div>
<div class="td" style="left:1224.3px;top:294.37px;width:74.7px">2023-09-21</div>
<div class="td" style="left:1309px;top:293.37px;width:113px">-</div>
<div class="cb" style="left:311.5px;top:333.94px"></div>
<div class="td" style="left:342.9px;top:325.34px;width:46.400000000000034px;text-align:center">3</div>
<div class="td" style="left:397.3px;top:325.34px;width:90.0px">00010</div>
<div class="td" style="left:496.3px;top:325.34px;width:75.40000000000003px">2023-07-24</div>
<div class="td" style="left:580.7px;top:324.34px;width:112.29999999999995px">-</div>
<div class="td" style="left:703.3px;top:324.34px;width:74.7px">-</div>
<div class="tag" style="left:787.3px;top:331.34px;background:#fca93c"><span style="position:relative;top:1.1px">领料</span></div>
<div class="td" style="left:871.7px;top:324.34px;width:90.29999999999995px">-</div>
<div class="td" style="left:971.3px;top:324.34px;width:74.7px">-</div>
<div class="td" style="left:1055.7px;top:324.34px;width:74.8px">-</div>
<div class="td" style="left:1139.8px;top:325.34px;width:75.2px">10.00</div>
<div class="td" style="left:1224.3px;top:325.34px;width:74.7px">2023-07-24</div>
<div class="td" style="left:1309px;top:324.34px;width:113px">-</div>
<div class="cb" style="left:311.5px;top:364.91px"></div>
<div class="td" style="left:342.9px;top:356.31px;width:46.400000000000034px;text-align:center">4</div>
<div class="td" style="left:397.3px;top:356.31px;width:90.0px">00009</div>
<div class="td" style="left:496.3px;top:356.31px;width:75.40000000000003px">2023-07-24</div>
<div class="td" style="left:580.7px;top:355.31px;width:112.29999999999995px">-</div>
<div class="td" style="left:703.3px;top:355.31px;width:74.7px">-</div>
<div class="tag" style="left:787.3px;top:362.31px;background:#fca93c"><span style="position:relative;top:1.1px">领料</span></div>
<div class="td" style="left:871.7px;top:355.31px;width:90.29999999999995px">-</div>
<div class="td" style="left:971.3px;top:355.31px;width:74.7px">-</div>
<div class="td" style="left:1055.7px;top:355.31px;width:74.8px">-</div>
<div class="td" style="left:1139.8px;top:355.31px;width:75.2px">-</div>
<div class="td" style="left:1224.3px;top:356.31px;width:74.7px">2023-07-24</div>
<div class="td" style="left:1309px;top:355.31px;width:113px">-</div>
<div class="cb" style="left:311.5px;top:395.88px"></div>
<div class="td" style="left:342.9px;top:387.28px;width:46.400000000000034px;text-align:center">5</div>
<div class="td" style="left:397.3px;top:387.28px;width:90.0px">00008</div>
<div class="td" style="left:496.3px;top:387.28px;width:75.40000000000003px">2023-06-29</div>
<div class="td" style="left:580.7px;top:387.28px;width:112.29999999999995px">磷化学镀镍浓缩液</div>
<div class="td" style="left:703.3px;top:387.28px;width:74.7px">2.00</div>
<div class="tag" style="left:787.3px;top:393.28px;background:#fca93c"><span style="position:relative;top:1.1px">领料</span></div>
<div class="td" style="left:871.7px;top:387.28px;width:90.29999999999995px">54</div>
<div class="td" style="left:971.3px;top:387.28px;width:74.7px">433.00</div>
<div class="td" style="left:1055.7px;top:387.28px;width:74.8px">200.00</div>
<div class="td" style="left:1139.8px;top:387.28px;width:75.2px">2022.90</div>
<div class="td" style="left:1224.3px;top:387.28px;width:74.7px">2031-06-29</div>
<div class="td" style="left:1309px;top:387.28px;width:113px">国际铅锌研究机构主...</div>
<div class="cb" style="left:311.5px;top:426.85px"></div>
<div class="td" style="left:342.9px;top:418.25px;width:46.400000000000034px;text-align:center">6</div>
<div class="td" style="left:397.3px;top:418.25px;width:90.0px">00007</div>
<div class="td" style="left:496.3px;top:418.25px;width:75.40000000000003px">2023-04-27</div>
<div class="td" style="left:580.7px;top:418.25px;width:112.29999999999995px">压力管道</div>
<div class="td" style="left:703.3px;top:417.25px;width:74.7px">-</div>
<div class="tag" style="left:787.3px;top:424.25px;background:#fca93c"><span style="position:relative;top:1.1px">领料</span></div>
<div class="td" style="left:871.7px;top:417.25px;width:90.29999999999995px">-</div>
<div class="td" style="left:971.3px;top:417.25px;width:74.7px">-</div>
<div class="td" style="left:1055.7px;top:417.25px;width:74.8px">-</div>
<div class="td" style="left:1139.8px;top:417.25px;width:75.2px">-</div>
<div class="td" style="left:1224.3px;top:418.25px;width:74.7px">2023-04-27</div>
<div class="td" style="left:1309px;top:417.25px;width:113px">-</div>
<div class="cb" style="left:311.5px;top:457.82px"></div>
<div class="td" style="left:342.9px;top:449.22px;width:46.400000000000034px;text-align:center">7</div>
<div class="td" style="left:397.3px;top:449.22px;width:90.0px">00006</div>
<div class="td" style="left:496.3px;top:449.22px;width:75.40000000000003px">2023-04-26</div>
<div class="td" style="left:580.7px;top:449.22px;width:112.29999999999995px">压力管道</div>
<div class="td" style="left:703.3px;top:448.22px;width:74.7px">-</div>
<div class="tag" style="left:787.3px;top:455.22px;background:#fca93c"><span style="position:relative;top:1.1px">领料</span></div>
<div class="td" style="left:871.7px;top:448.22px;width:90.29999999999995px">-</div>
<div class="td" style="left:971.3px;top:448.22px;width:74.7px">-</div>
<div class="td" style="left:1055.7px;top:448.22px;width:74.8px">-</div>
<div class="td" style="left:1139.8px;top:448.22px;width:75.2px">-</div>
<div class="td" style="left:1224.3px;top:449.22px;width:74.7px">2023-04-26</div>
<div class="td" style="left:1309px;top:448.22px;width:113px">-</div>
<div class="cb" style="left:311.5px;top:488.79px"></div>
<div class="td" style="left:342.9px;top:480.19px;width:46.400000000000034px;text-align:center">8</div>
<div class="td" style="left:397.3px;top:480.19px;width:90.0px">00005</div>
<div class="td" style="left:496.3px;top:480.19px;width:75.40000000000003px">2023-04-26</div>
<div class="td" style="left:580.7px;top:480.19px;width:112.29999999999995px">磷化学镀镍浓缩液</div>
<div class="td" style="left:703.3px;top:479.19px;width:74.7px">-</div>
<div class="tag" style="left:787.3px;top:486.19px;background:#ff612c"><span style="position:relative;top:1.1px">检测</span></div>
<div class="td" style="left:871.7px;top:480.19px;width:90.29999999999995px">54</div>
<div class="td" style="left:971.3px;top:480.19px;width:74.7px">433.00</div>
<div class="td" style="left:1055.7px;top:480.19px;width:74.8px">200.00</div>
<div class="td" style="left:1139.8px;top:480.19px;width:75.2px">2022.90</div>
<div class="td" style="left:1224.3px;top:480.19px;width:74.7px">2031-04-26</div>
<div class="td" style="left:1309px;top:480.19px;width:113px">国际铅锌研究机构主...</div>
<div class="cb" style="left:311.5px;top:519.76px"></div>
<div class="td" style="left:342.9px;top:511.16px;width:46.400000000000034px;text-align:center">9</div>
<div class="td" style="left:397.3px;top:511.16px;width:90.0px">00004</div>
<div class="td" style="left:496.3px;top:511.16px;width:75.40000000000003px">2022-12-19</div>
<div class="td" style="left:580.7px;top:511.16px;width:112.29999999999995px">磷化学镀镍浓缩液</div>
<div class="td" style="left:703.3px;top:510.16px;width:74.7px">-</div>
<div class="tag" style="left:787.3px;top:517.16px;background:#fca93c"><span style="position:relative;top:1.1px">领料</span></div>
<div class="td" style="left:871.7px;top:511.16px;width:90.29999999999995px">54</div>
<div class="td" style="left:971.3px;top:511.16px;width:74.7px">433.00</div>
<div class="td" style="left:1055.7px;top:511.16px;width:74.8px">200.00</div>
<div class="td" style="left:1139.8px;top:511.16px;width:75.2px">2022.90</div>
<div class="td" style="left:1224.3px;top:511.16px;width:74.7px">2030-12-19</div>
<div class="td" style="left:1309px;top:511.16px;width:113px">国际铅锌研究机构主...</div>
<div class="cb" style="left:311.5px;top:550.73px"></div>
<div class="td" style="left:342.9px;top:542.13px;width:46.400000000000034px;text-align:center">10</div>
<div class="td" style="left:397.3px;top:542.13px;width:90.0px">00003</div>
<div class="td" style="left:496.3px;top:542.13px;width:75.40000000000003px">2022-12-19</div>
<div class="td" style="left:580.7px;top:542.13px;width:112.29999999999995px">磷化学镀镍浓缩液</div>
<div class="td" style="left:703.3px;top:541.13px;width:74.7px">-</div>
<div class="tag" style="left:787.3px;top:548.13px;background:#fca93c"><span style="position:relative;top:1.1px">领料</span></div>
<div class="td" style="left:871.7px;top:542.13px;width:90.29999999999995px">54</div>
<div class="td" style="left:971.3px;top:542.13px;width:74.7px">433.00</div>
<div class="td" style="left:1055.7px;top:542.13px;width:74.8px">200.00</div>
<div class="td" style="left:1139.8px;top:542.13px;width:75.2px">2022.90</div>
<div class="td" style="left:1224.3px;top:542.13px;width:74.7px">2030-12-19</div>
<div class="td" style="left:1309px;top:542.13px;width:113px">国际铅锌研究机构主...</div>
<div class="cb" style="left:311.5px;top:581.70px"></div>
<div class="td" style="left:342.9px;top:573.10px;width:46.400000000000034px;text-align:center">11</div>
<div class="td" style="left:397.3px;top:573.10px;width:90.0px">00002</div>
<div class="td" style="left:496.3px;top:573.10px;width:75.40000000000003px">2022-12-19</div>
<div class="td" style="left:580.7px;top:573.10px;width:112.29999999999995px">锌镍合金添加剂</div>
<div class="td" style="left:703.3px;top:572.10px;width:74.7px">-</div>
<div class="tag" style="left:787.3px;top:579.10px;background:#fca93c"><span style="position:relative;top:1.1px">领料</span></div>
<div class="td" style="left:871.7px;top:573.10px;width:90.29999999999995px">251</div>
<div class="td" style="left:971.3px;top:573.10px;width:74.7px">234.00</div>
<div class="td" style="left:1055.7px;top:573.10px;width:74.8px">100.00</div>
<div class="td" style="left:1139.8px;top:573.10px;width:75.2px">2022.07</div>
<div class="td" style="left:1224.3px;top:573.10px;width:74.7px">2028-12-19</div>
<div class="td" style="left:1309px;top:573.10px;width:113px">NaOH、锌和镍的含...</div>
<div class="cb" style="left:311.5px;top:612.67px"></div>
<div class="td" style="left:342.9px;top:604.07px;width:46.400000000000034px;text-align:center">12</div>
<div class="td" style="left:397.3px;top:604.07px;width:90.0px">00001</div>
<div class="td" style="left:496.3px;top:604.07px;width:75.40000000000003px">2022-12-19</div>
<div class="td" style="left:580.7px;top:604.07px;width:112.29999999999995px">锌镍合金添加剂</div>
<div class="td" style="left:703.3px;top:603.07px;width:74.7px">-</div>
<div class="tag" style="left:787.3px;top:610.07px;background:#fca93c"><span style="position:relative;top:1.1px">领料</span></div>
<div class="td" style="left:871.7px;top:604.07px;width:90.29999999999995px">251</div>
<div class="td" style="left:971.3px;top:604.07px;width:74.7px">234.00</div>
<div class="td" style="left:1055.7px;top:604.07px;width:74.8px">100.00</div>
<div class="td" style="left:1139.8px;top:604.07px;width:75.2px">2022.07</div>
<div class="td" style="left:1224.3px;top:604.07px;width:74.7px">2028-12-19</div>
<div class="td" style="left:1309px;top:604.07px;width:113px">NaOH、锌和镍的含...</div>
</div>
<div class="abs" style="left:1435px;top:180px;width:1.2px;height:610px;background:#e6e6e6"></div>
<div class="abs" style="left:1435px;top:223px;width:1.2px;height:275.7px;background:#969390"></div>
<svg class="ico" style="left:304px;top:804.8px" width="10" height="10" viewBox="0 0 10 10"><circle cx="5" cy="5" r="4.6" fill="#19be6b"/><path d="M2.8 5.1L4.4 6.6L7.3 3.6" fill="none" stroke="#fff" stroke-width="1.1"/></svg>
<div class="abs" style="left:320px;top:802.8px;height:16px;line-height:16px;font-size:9.2px;color:#444;white-space:nowrap">数据准备完成</div>
<div class="abs" style="left:1178.8px;top:801.2px;height:18px;line-height:18px;font-size:10.6px;color:#5c5e62;white-space:nowrap">共 12 条</div>
<div class="abs" style="left:1227px;top:800.4px;width:77.5px;height:19px;border:1px solid #e5e7ec;border-radius:3px;background:#fff"></div>
<div class="abs" style="left:1242.3px;top:801.2px;height:18px;line-height:18px;font-size:10.4px;color:#5c5e62;white-space:nowrap">20条/页</div>
<svg class="ico" style="left:1291px;top:807.2px" width="8" height="5" viewBox="0 0 8 5"><path d="M1 0.8L4 3.8L7 0.8" fill="none" stroke="#c3c3c3" stroke-width="0.9"/></svg>
<div class="abs" style="left:1319.8px;top:800.6px;width:18.8px;height:18.8px;background:#f4f4f5;border-radius:2px"></div>
<svg class="ico" style="left:1326px;top:805.6px" width="6" height="8" viewBox="0 0 6 8"><path d="M4.4 1L1.5 4L4.4 7" fill="none" stroke="#d0d0d0" stroke-width="1"/></svg>
<div class="abs" style="left:1350.3px;top:800.6px;width:18.6px;height:18.6px;background:#2e67ec;border-radius:2px;color:#fff;text-align:center;line-height:19px;font-size:10px">1</div>
<div class="abs" style="left:1380.6px;top:800.6px;width:18.6px;height:18.8px;background:#f4f4f5;border-radius:2px"></div>
<svg class="ico" style="left:1387px;top:805.6px" width="6" height="8" viewBox="0 0 6 8"><path d="M1.6 1L4.5 4L1.6 7" fill="none" stroke="#d0d0d0" stroke-width="1"/></svg>
<div class="abs" style="left:1410.7px;top:802.6px;height:16px;line-height:16px;font-size:9.2px;color:#555;white-space:nowrap">前往</div>
</div></div></body></html>
